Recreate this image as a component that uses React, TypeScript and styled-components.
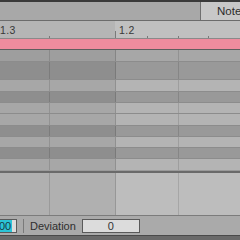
import { createGlobalStyle, styled } from "styled-components";

const GlobalStyle = createGlobalStyle`
  *, *::before, *::after {
    box-sizing: border-box;
  }
  html, body {
    margin: 0;
    padding: 0;
    background: #a9a9a9;
    overflow: hidden;
  }
  body {
    font-family: "Liberation Sans", Arial, sans-serif;
  }
`;

const Frame = styled.div`
  width: 240px;
  height: 240px;
  display: flex;
  flex-direction: column;
  overflow: hidden;
`;

const TopEdge = styled.div`
  height: 2px;
  flex: none;
  background: #3a3a3a;
`;

const Header = styled.div`
  height: 19px;
  flex: none;
  display: flex;
  background: #a8a8a8;
  border-bottom: 1px solid #6c6c6c;
`;

const Spacer = styled.div`
  flex: 1;
`;

const Tab = styled.div`
  width: 40px;
  display: flex;
  align-items: center;
  padding-left: 16px;
  background: #c8c8c8;
  border-left: 1px solid #707070;
  font-size: 11.5px;
  color: #2c2c2c;
  white-space: nowrap;
`;

const Ruler = styled.div`
  height: 18px;
  flex: none;
  display: grid;
  grid-template-columns: 49px 66px 32px 31px 30px 1fr;
  border-bottom: 1px solid #8a8a8a;
`;

const RulerPart = styled.div<{ $bright?: boolean }>`
  display: flex;
  align-items: flex-end;
  gap: 3px;
  padding-bottom: 1px;
  background: ${(p) => (p.$bright ? "#c0c0c0" : "#b5b5b5")};
  font-size: 10.5px;
  letter-spacing: 0.4px;
  color: #383838;
  white-space: nowrap;
`;

const Tick = styled.span<{ $tall?: boolean }>`
  width: 1px;
  height: ${(p) => (p.$tall ? 7 : 2)}px;
  margin-bottom: -1px;
  background: #7a7a7a;
  align-self: flex-end;
`;

const BarNumber = styled.span`
  line-height: 12px;
  margin-bottom: 1px;
`;

const ClipBar = styled.div`
  height: 11px;
  flex: none;
  background: #ee8c9e;
  border-bottom: 1px solid #5e5e5e;
`;

const Lane = styled.div<{ $h: number; $line?: string }>`
  height: ${(p) => p.$h}px;
  flex: none;
  display: grid;
  grid-template-columns: 49px 66px 63px 1fr;
  border-bottom: ${(p) => (p.$line ? `1px solid ${p.$line}` : "none")};
`;

const Cell = styled.div<{ $bg: string; $edge?: "soft" | "strong" }>`
  background: ${(p) => p.$bg};
  border-left: ${(p) =>
    p.$edge === "strong"
      ? "1px solid rgba(0,0,0,0.2)"
      : p.$edge === "soft"
        ? "1px solid rgba(0,0,0,0.12)"
        : "none"};
`;

const Divider = styled.div`
  height: 2px;
  flex: none;
  background: #6a6a6a;
`;

const BottomBar = styled.div`
  height: 21px;
  flex: none;
  display: flex;
  align-items: center;
  gap: 6px;
  background: #aaaaaa;
  border-top: 1px solid #7c7c7c;
  border-bottom: 1px solid #4a4a4a;
`;

const Field = styled.div<{ $w: number }>`
  width: ${(p) => p.$w}px;
  height: 14px;
  display: flex;
  align-items: center;
  justify-content: center;
  background: #dcdcdc;
  border: 1px solid #5a5a5a;
  font-size: 11px;
  color: #333;
`;

const SelectedField = styled(Field)`
  justify-content: flex-start;
  margin-left: -1px;
  border-left: none;
`;

const Selection = styled.span`
  background: #2bc4d6;
  color: #1a3a44;
  padding-right: 1px;
  line-height: 12px;
`;

const Sep = styled.div`
  width: 1px;
  height: 14px;
  background: #7a7a7a;
`;

const Label = styled.span`
  font-size: 11px;
  color: #2e2e2e;
`;

const Foot = styled.div`
  flex: 1;
  background: #6a6a6a;
`;

type Tone = "mid" | "dark" | "light" | "pale";

const tones: Record<Tone, [string, string]> = {
  mid: ["#9e9e9e", "#a7a7a7"],
  dark: ["#8e8e8e", "#999999"],
  light: ["#a7a7a7", "#b4b4b4"],
  pale: ["#b0b0b0", "#bdbdbd"],
};

const lanes: { tone: Tone; h: number }[] = [
  { tone: "mid", h: 12 },
  { tone: "dark", h: 18 },
  { tone: "light", h: 12 },
  { tone: "dark", h: 11 },
  { tone: "light", h: 11 },
  { tone: "light", h: 12 },
  { tone: "dark", h: 11 },
  { tone: "light", h: 11 },
  { tone: "dark", h: 11 },
  { tone: "light", h: 12 },
];

const LaneRow = ({ tone, h, line }: { tone: Tone; h: number; line?: string }) => {
  const [dim, bright] = tones[tone];
  return (
    <Lane $h={h} $line={line}>
      <Cell $bg={dim} />
      <Cell $bg={dim} $edge="soft" />
      <Cell $bg={bright} $edge="strong" />
      <Cell $bg={bright} $edge="soft" />
    </Lane>
  );
};

export default function App() {
  return (
    <Frame>
      <GlobalStyle />
      <TopEdge />
      <Header>
        <Spacer />
        <Tab>Note</Tab>
      </Header>
      <Ruler>
        <RulerPart>
          <BarNumber>1.3</BarNumber>
        </RulerPart>
        <RulerPart>
          <Tick />
        </RulerPart>
        <RulerPart $bright>
          <Tick $tall />
          <BarNumber>1.2</BarNumber>
        </RulerPart>
        <RulerPart $bright>
          <Tick />
        </RulerPart>
        <RulerPart $bright>
          <Tick />
        </RulerPart>
        <RulerPart $bright>
          <Tick />
        </RulerPart>
      </Ruler>
      <ClipBar />
      {lanes.map((l, i) => (
        <LaneRow key={i} tone={l.tone} h={l.h} line={i === lanes.length - 1 ? "#9a9a9a" : "#8c8c8c"} />
      ))}
      <Divider />
      <LaneRow tone="pale" h={42} />
      <BottomBar>
        <SelectedField $w={18}>
          <Selection>00</Selection>
        </SelectedField>
        <Sep />
        <Label>Deviation</Label>
        <Field $w={58}>0</Field>
      </BottomBar>
      <Foot />
    </Frame>
  );
}
